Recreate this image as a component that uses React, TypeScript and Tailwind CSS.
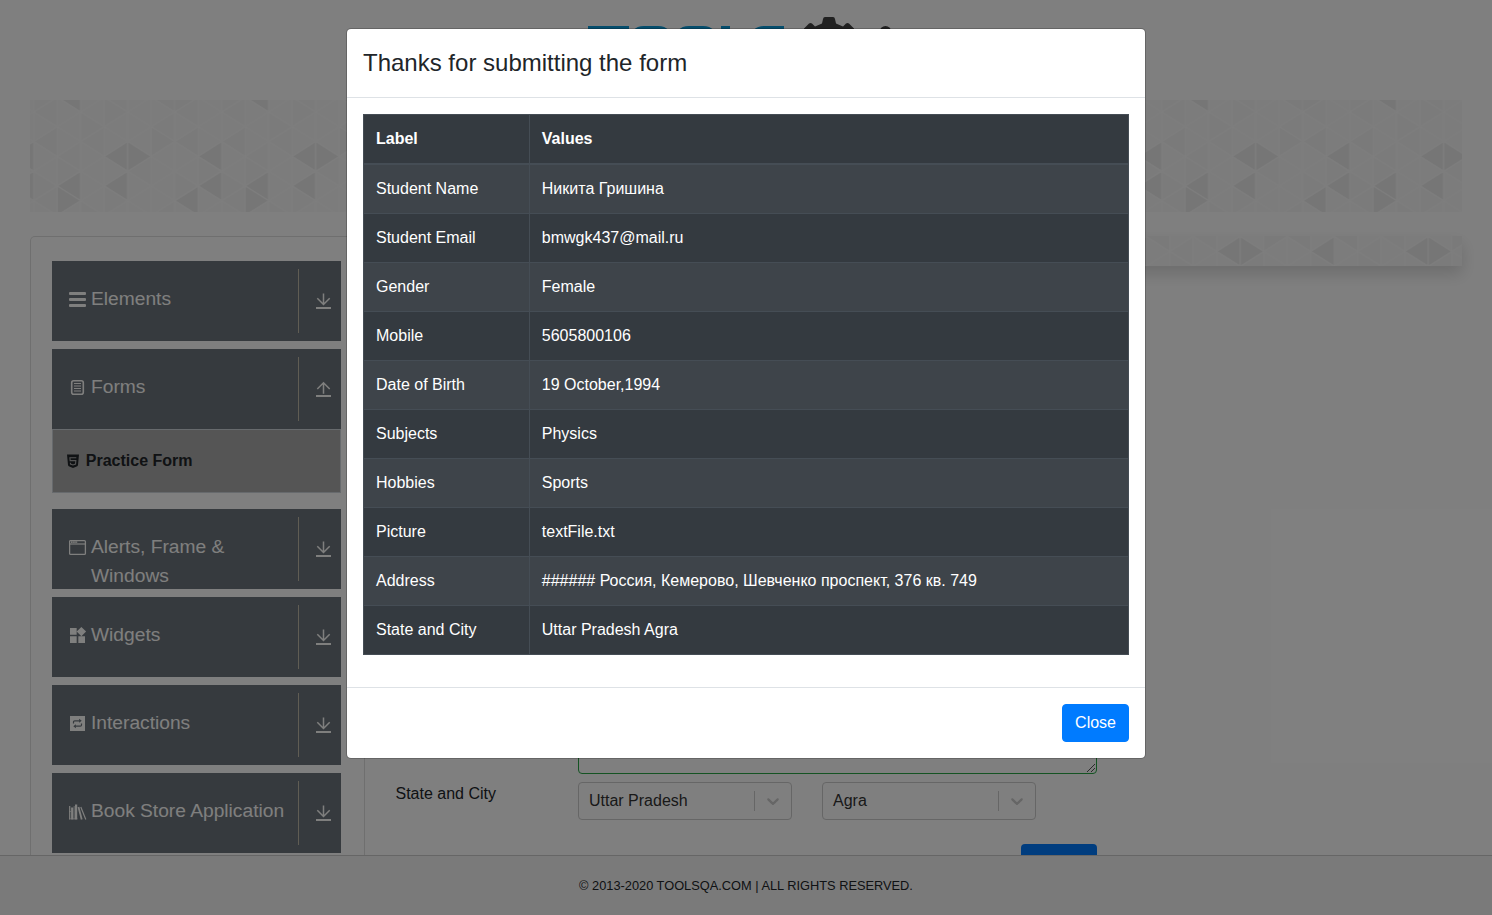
import React from 'react';
import { MdWidgets } from 'react-icons/md';

const LINE_GAP = 23.5;
const ROW = 29.6;
const darkCells = ['1L0', '1L3', '1R3', '3L2', '4R2', '3L3', '7L2', '7L3', '6L3'];
const midCells = ['6L1', '5R1', '5L0', '6R0', '0L1'];

function cellPoints(col: number, side: string, row: number) {
  const lineY = (line: number, r: number) => (line % 2 === 0 ? 12 : -2.8) + r * ROW;
  const x0 = col * LINE_GAP;
  const x1 = x0 + LINE_GAP;
  const y = lineY(side === 'L' ? col : col + 1, row);
  return side === 'L'
    ? `${x0},${y} ${x1},${y - ROW / 2} ${x1},${y + ROW / 2}`
    : `${x1},${y} ${x0},${y - ROW / 2} ${x0},${y + ROW / 2}`;
}

function cellFill(key: string, col: number, row: number) {
  if (darkCells.includes(key)) return '#ececec';
  if (midCells.includes(key)) return '#f4f4f4';
  return (col + row) % 3 === 0 ? '#f7f7f7' : '#f9f9f9';
}

function Triangles({ id, dx, dy }: { id: string; dx: number; dy: number }) {
  const cells: { key: string; col: number; side: string; row: number }[] = [];
  for (let col = 0; col < 8; col++)
    for (let row = -1; row < 6; row++)
      for (const side of ['L', 'R']) cells.push({ key: `${col}${side}${row}`, col, side, row });
  return (
    <svg className="block h-full w-full">
      <defs>
        <pattern id={id} width="188" height="120" patternUnits="userSpaceOnUse" patternTransform={`translate(${dx} ${dy})`}>
          <rect width="188" height="120" fill="#fafafa" />
          {cells.map((c) => (
            <polygon
              key={c.key}
              points={cellPoints(c.col, c.side, c.row)}
              fill={cellFill(c.key, c.col, c.row)}
              stroke="#fcfcfc"
              strokeWidth="1.2"
              strokeLinejoin="round"
            />
          ))}
        </pattern>
      </defs>
      <rect width="100%" height="100%" fill={`url(#${id})`} />
    </svg>
  );
}

const BarsIcon = () => (
  <svg viewBox="0.5 0.5 18 18" className="h-[18px] w-[18px]" fill="currentColor">
    <rect x="0.5" y="1.5" width="17" height="3" rx="1" />
    <rect x="0.5" y="7.5" width="17" height="3" rx="1" />
    <rect x="0.5" y="13.5" width="17" height="3" rx="1" />
  </svg>
);
const FormIcon = () => (
  <svg viewBox="0.5 0.5 18 18" className="h-[18px] w-[18px]" fill="none" stroke="currentColor">
    <rect x="3.2" y="2.2" width="11.6" height="13.6" rx="2" strokeWidth="1.6" />
    <path d="M5.500 5h7M5.500 7.500h7M5.500 10h7M5.500 12.500h7" strokeWidth="1.200" />
  </svg>
);
const WindowIcon = () => (
  <svg viewBox="0.5 0.5 18 18" className="h-[18px] w-[18px]" fill="none" stroke="currentColor">
    <rect x="1.1" y="2.1" width="15.8" height="13.8" rx="1" strokeWidth="1.300" />
    <path d="M1 5.500h16" strokeWidth="1.200" />
    <path d="M2.600 3.700h6.500" strokeWidth="1.800" strokeDasharray="1.500 .6" />
  </svg>
);
const RepeatIcon = () => (
  <svg viewBox="0.5 0.5 18 18" className="h-[18px] w-[18px]">
    <path d="M1.500 1.500h15v15h-15z" fill="currentColor" />
    <path d="M5 9V7.500q0-1.200 1.200-1.200H11M13 9v1.500q0 1.200-1.200 1.200H7" fill="none" stroke="#6c757d" strokeWidth="1.200" />
    <path d="M10.600 4.300l2.600 2-2.600 2zM7.400 9.700l-2.600 2 2.600 2z" fill="#6c757d" />
  </svg>
);
const BooksIcon = () => (
  <svg viewBox="0.5 0.5 18 18" className="h-[18px] w-[18px]" fill="none" stroke="currentColor">
    <path d="M1.200 3.500v13.500" strokeWidth="1.200" />
    <path d="M3.700 5v12" strokeWidth="2.200" />
    <path d="M5.700 3.500v13.500" strokeWidth="1" opacity=".7" />
    <path d="M7.600 2v15" strokeWidth="2.200" />
    <path d="M.5 9h2M.5 16.300h8.500" strokeWidth="1" opacity=".6" />
    <path d="M10 4.500l3.200 12.500" strokeWidth="1.800" />
    <path d="M12.300 4.500l5 12.500" strokeWidth="1.200" />
  </svg>
);
const HtmlIcon = () => (
  <svg viewBox="0 0 14 16" className="h-4 w-[14px]">
    <path d="M1 1.500h12l-1 10.500q-.2 1.200-1.300 1.600L7 15l-3.700-1.400Q2.200 13.200 2 12z" fill="#212529" />
    <path d="M10.300 4.700H3.900l.25 2.900h5.700l-.3 3.500L7 12l-2.500-.9-.1-1.300" fill="none" stroke="#aaa" strokeWidth="1.100" />
  </svg>
);
const Arrow = ({ up }: { up?: boolean }) => (
  <svg viewBox="0.5 0 16 18" className="h-[18px] w-4" fill="none" stroke="currentColor" strokeWidth="1.500">
    <path d={up ? 'M8 13.800V2.700M1.800 9L8 2.800l6.200 6.200' : 'M8 1.500v11M1.800 6.300L8 12.500l6.200-6.200'} />
    <path d="M.5 16h15" strokeWidth="2" />
  </svg>
);

function MenuItem({ icon, label, up }: { icon: React.ReactNode; label: string; up?: boolean }) {
  return (
    <div className="flex h-20 overflow-hidden bg-[#6c757d] text-[#fffefc]">
      <div className="flex w-[246px] pl-[17px] pt-[23px]">
        <span className="mt-[7px] flex h-[18px] w-[18px] shrink-0 items-center justify-center">{icon}</span>
        <span className="ml-1 text-[19.2px] leading-[29px]">{label}</span>
      </div>
      <div className="my-2 w-px bg-[#c1bba9]" />
      <div className="pl-[17px] pt-[31px]"><Arrow up={up} /></div>
    </div>
  );
}

function Select({ value }: { value: string }) {
  return (
    <div className="flex h-[38px] w-[214px] items-center rounded border border-[#ccc] text-[#333]">
      <span className="flex-1 pl-[10px]">{value}</span>
      <span className="h-5 w-px bg-[#ccc]" />
      <span className="p-2 text-[#ccc]">
        <svg viewBox="0 0 20 20" className="h-5 w-5" fill="currentColor">
          <path d="M4.516 7.548c0.436-0.446 1.043-0.481 1.576 0l3.908 3.747 3.908-3.747c0.533-0.481 1.141-0.446 1.574 0 0.436 0.445 0.408 1.197 0 1.615-0.406 0.418-4.695 4.502-4.695 4.502-0.217 0.223-0.502 0.335-0.787 0.335s-0.570-0.112-0.789-0.335c0 0-4.287-4.084-4.695-4.502s-0.436-1.170 0-1.615z" />
        </svg>
      </span>
    </div>
  );
}

const rows = [
  ['Student Name', 'Никита Гришина'],
  ['Student Email', 'bmwgk437@mail.ru'],
  ['Gender', 'Female'],
  ['Mobile', '5605800106'],
  ['Date of Birth', '19 October,1994'],
  ['Subjects', 'Physics'],
  ['Hobbies', 'Sports'],
  ['Picture', 'textFile.txt'],
  ['Address', '###### Россия, Кемерово, Шевченко проспект, 376 кв. 749'],
  ['State and City', 'Uttar Pradesh Agra'],
];

function Logo() {
  return (
    <svg viewBox="0 0 320 60" className="h-[60px] w-[320px]">
      <g fill="none" stroke="#0a9bd8" strokeWidth="9">
        <path d="M2 14.500h41M22 14v32M72 14.500h-14q-10 0-10 11v8q0 11 10 11h14q10 0 10-11v-8q0-11-10-11zM117 14.500h-14q-10 0-10 11v8q0 11 10 11h14q10 0 10-11v-8q0-11-10-11zM139.500 10v36h20M198 14.500h-20q-9 0-9 9t9 9h12" />
      </g>
      <path d="M237 3q.3-2 2-2h8q1.700 0 2 2l1 4.500 7 3 3-3q1.500-1 3 0l5 5v22h-50v-22l5-5q1.500-1 3 0l3 3 7-3z" fill="#424242" />
      <circle cx="299.5" cy="16" r="6" fill="#424242" />
    </svg>
  );
}

export default function App() {
  return (
    <div className="relative flex h-[915px] w-[1492px] flex-col overflow-hidden bg-white font-['Liberation_Sans',sans-serif] text-base text-[#212529]">
      <header className="flex h-[100px] shrink-0 pl-[586px] pt-4"><Logo /></header>
      <div className="mx-[30px] h-28 shrink-0"><Triangles id="banner" dx={3.7} dy={0} /></div>
      <div className="mx-[30px] mt-6 flex h-[619px] shrink-0 overflow-visible">
        <aside className="flex w-[335px] shrink-0 flex-col gap-2 rounded-t-[5px] border border-b-0 border-[#dfdfdf] pl-[21px] pr-[23px] pt-6">
          <MenuItem icon={<BarsIcon />} label="Elements" />
          <div className="mb-2">
            <MenuItem icon={<FormIcon />} label="Forms" up />
            <div className="flex h-16 items-center border border-[#ced4da] bg-[#aaa] pl-[13px] font-bold"><HtmlIcon /><span className="ml-[5.8px]">Practice Form</span></div>
          </div>
          <MenuItem icon={<WindowIcon />} label="Alerts, Frame & Windows" />
          <MenuItem icon={<MdWidgets size={20} viewBox="0.6 0.6 24 24" className="shrink-0" />} label="Widgets" />
          <MenuItem icon={<RepeatIcon />} label="Interactions" />
          <MenuItem icon={<BooksIcon />} label="Book Store Application" />
        </aside>
        <main className="w-[732px] shrink-0 pl-[30px] pt-[450px]">
          <div className="ml-[183px] h-[88px] w-[519px]">
            <div className="flex h-full items-end justify-end rounded border border-[#28a745]">
              <svg viewBox="0 0 10 10" className="h-[10px] w-[10px]" stroke="#555"><path d="M1 9l8-8M5 9l4-4" /></svg>
            </div>
          </div>
          <div className="mt-2 flex">
            <span className="w-[183px] shrink-0 pl-[.5px] leading-6">State and City</span>
            <div className="flex gap-[30px]"><Select value="Uttar Pradesh" /><Select value="Agra" /></div>
          </div>
          <div className="mt-6 flex justify-end"><div className="h-[11px] w-[76px] rounded-t bg-[#007bff]" /></div>
        </main>
        <div className="h-[30px] flex-1 shadow-[0_8px_16px_rgba(0,0,0,0.15)]"><Triangles id="strip" dx={49.3} dy={-41} /></div>
      </div>
      <footer className="z-0 flex h-[60px] shrink-0 items-center justify-center border-t border-[#ccc] bg-[#f5f5f5] text-[12.8px]">© 2013-2020 TOOLSQA.COM | ALL RIGHTS RESERVED.</footer>

      <div className="absolute inset-0 z-10 flex items-start justify-center bg-black/50 pt-7">
        <div role="dialog" className="w-[800px] rounded-[5px] border border-black/20 bg-white bg-clip-padding">
          <div className="border-b border-[#dee2e6] p-4 text-2xl leading-9">Thanks for submitting the form</div>
          <div className="p-4">
            <table className="mb-4 w-full table-fixed border-collapse bg-[#343a40] text-left text-white">
              <colgroup><col className="w-[165.8px]" /><col /></colgroup>
              <thead>
                <tr>
                  <th className="border border-b-2 border-[#454d55] p-3">Label</th>
                  <th className="border border-b-2 border-[#454d55] p-3">Values</th>
                </tr>
              </thead>
              <tbody>
                {rows.map(([k, v]) => (
                  <tr key={k} className="odd:bg-white/5">
                    <td className="border border-[#454d55] p-3">{k}</td>
                    <td className="border border-[#454d55] p-3">{v}</td>
                  </tr>
                ))}
              </tbody>
            </table>
          </div>
          <div className="flex justify-end border-t border-[#dee2e6] p-4">
            <button className="rounded border border-[#007bff] bg-[#007bff] px-3 py-1.5 text-white">Close</button>
          </div>
        </div>
      </div>
    </div>
  );
}
